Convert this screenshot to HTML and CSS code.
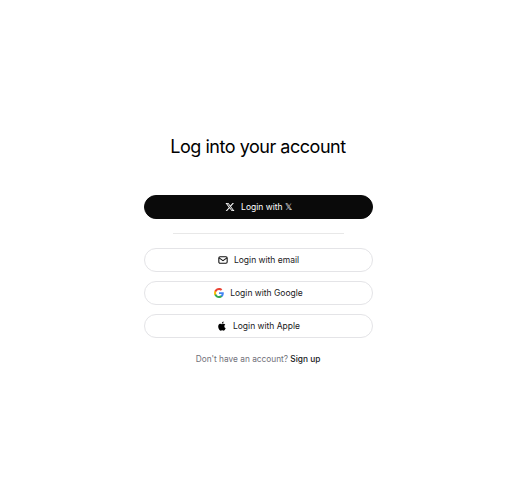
FILE: index.html
```
<!DOCTYPE html>
<html>
<head>
  <meta charset="utf-8">
  <title>Log into your account</title>
  <link rel="stylesheet" href="styles.css">
</head>
<body>

<div class="page">
  <div class="login-box">
    <h1 class="login-title">Log into your account</h1>

    <a class="login-button dark">
      <svg class="icon" viewBox="0 0 24 24" width="10" height="10"><path fill="#fff" d="M18.2 2.3h3.3l-7.2 8.2 8.5 11.2h-6.7l-5.2-6.8-6 6.8H1.6l7.7-8.8L1.2 2.3H8l4.7 6.2zm-1.2 17.4h1.8L7.1 4.2h-2z"/></svg>
      <span>Login with 𝕏</span>
    </a>

    <div class="divider"></div>

    <div class="button-list">
      <a class="login-button">
        <svg class="icon" viewBox="0 0 24 24" width="10" height="10" fill="none" stroke="#111" stroke-width="2.6"><rect x="2" y="4" width="20" height="16" rx="3"/><path d="M2.5 7l9.5 6.5L21.5 7"/></svg>
        <span>Login with email</span>
      </a>
      <a class="login-button">
        <svg class="icon" viewBox="0 0 24 24" width="10" height="10"><path fill="#4285f4" d="M23.5 12.3c0-.8-.1-1.6-.2-2.3H12v4.5h6.5c-.3 1.5-1.1 2.8-2.4 3.6v3h3.9c2.2-2.1 3.5-5.2 3.5-8.8z"/><path fill="#34a853" d="M12 24c3.2 0 6-1.1 8-2.9l-3.9-3c-1.1.7-2.5 1.2-4.1 1.2-3.1 0-5.8-2.1-6.7-5H1.3v3.1C3.3 21.3 7.3 24 12 24z"/><path fill="#fbbc05" d="M5.3 14.3c-.5-1.5-.5-3.1 0-4.6V6.6H1.3c-1.7 3.4-1.7 7.4 0 10.8z"/><path fill="#ea4335" d="M12 4.8c1.8 0 3.4.6 4.6 1.8l3.4-3.4C18 1.2 15.2 0 12 0 7.3 0 3.3 2.7 1.3 6.6l4 3.1c.9-2.8 3.6-4.9 6.7-4.9z"/></svg>
        <span>Login with Google</span>
      </a>
      <a class="login-button">
        <svg class="icon" viewBox="0 0 24 24" width="10" height="10"><path fill="#000" d="M17.6 12.7c0-2.7 2.2-4 2.3-4.1-1.3-1.8-3.2-2.1-3.9-2.1-1.7-.2-3.2 1-4.1 1-.9 0-2.2-1-3.6-1-1.8 0-3.600 1.100-4.500 2.700-2 3.400-.5 8.400 1.400 11.100.9 1.300 2 2.800 3.500 2.800 1.400-.1 1.900-.9 3.600-.9s2.100.9 3.600.9c1.500 0 2.400-1.300 3.300-2.700 1.100-1.500 1.500-3 1.500-3.100-.1 0-3.100-1.200-3.100-4.600zM14.800 4.500c.8-.9 1.300-2.200 1.100-3.500-1.100 0-2.500.7-3.300 1.700-.7.800-1.300 2.100-1.200 3.400 1.300.1 2.600-.7 3.400-1.600z"/></svg>
        <span>Login with Apple</span>
      </a>
    </div>

    <p class="signup-line">Don't have an account? <a class="signup-link">Sign up</a></p>
  </div>
</div>

</body>
</html>
```

FILE: styles.css
```
* {
  margin: 0;
  padding: 0;
  box-sizing: border-box;
}

body {
  background-color: #fff;
  font-family: Inter, "Liberation Sans", sans-serif;
  color: #000;
}

.page {
  display: flex;
  justify-content: center;
  padding-top: 135px;
}

.login-box {
  width: 229px;
  display: flex;
  flex-direction: column;
  align-items: center;
}

.login-title {
  font-size: 18px;
  line-height: 24px;
  font-weight: 400;
  letter-spacing: -0.47px;
  margin-bottom: 36px;
}

.login-button {
  width: 100%;
  height: 24px;
  display: flex;
  align-items: center;
  justify-content: center;
  gap: 6px;
  padding-left: 1px;
  border: 1px solid #e4e4e7;
  border-radius: 12px;
  background: #fff;
  font-size: 8.5px;
  font-weight: 400;
  color: #18181b;
}

.login-button.dark {
  background: #0a0a0a;
  border-color: #0a0a0a;
  color: #fff;
}

.icon {
  flex: none;
}

.divider {
  width: 171px;
  height: 1px;
  background: #e8e8e8;
  margin: 14px 0;
}

.button-list {
  width: 100%;
  display: flex;
  flex-direction: column;
  gap: 9px;
}

.signup-line {
  margin-top: 15px;
  font-size: 8.3px;
  line-height: 12px;
  color: #71717a;
}

.signup-link {
  color: #18181b;
  font-weight: 500;
}
```
